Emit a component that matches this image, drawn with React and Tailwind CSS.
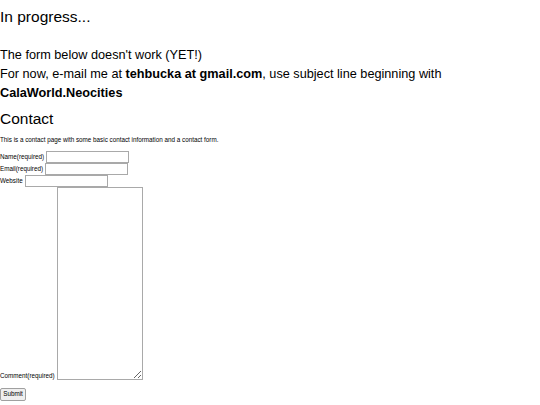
import React from 'react';

const Row = ({ label, children, end }) => (
    <div className={`flex gap-[2px] ${end ? 'items-end' : 'items-center'}`}>
        <label className="text-[6.3px] leading-[8px]">{label}</label>
        {children}
    </div>
);

const Field = () => (
    <input type="text" className="w-[83px] h-[12px] border border-[#a9a9a9] bg-white outline-none" />
);

export default function App() {
    return (
        <div className="min-h-[405px] bg-white text-black font-['Liberation_Sans',Arial,sans-serif]">
            <h3 className="text-[15.5px] leading-[18px] pt-[8px]">In progress...</h3>

            <p className="mt-[20px] text-[12.7px] leading-[19px]">
                The form below doesn't work (YET!)
                <br />
                For now, e-mail me at <b>tehbucka at gmail.com</b>, use subject line beginning with
                <br />
                <b>CalaWorld.Neocities</b>
            </p>

            <h3 className="mt-[7px] text-[15.5px] leading-[18px]">Contact</h3>
            <p className="mt-[8px] text-[6.3px] leading-[8px]">
                This is a contact page with some basic contact information and a contact form.
            </p>

            <form className="mt-[7px] flex flex-col" onSubmit={(e) => e.preventDefault()}>
                <Row label="Name(required)"><Field /></Row>
                <Row label="Email(required)"><Field /></Row>
                <Row label="Website"><Field /></Row>
                <Row label="Comment(required)" end>
                    <textarea className="w-[86px] h-[193px] border border-[#a9a9a9] bg-white outline-none block" />
                </Row>
                <div className="mt-[8px] flex">
                    <button type="submit" className="w-[26px] h-[13px] text-[6.3px] leading-none border border-[#a0a0a0] rounded-[2px] bg-[#efefef]">
                        Submit
                    </button>
                </div>
            </form>
        </div>
    );
}
